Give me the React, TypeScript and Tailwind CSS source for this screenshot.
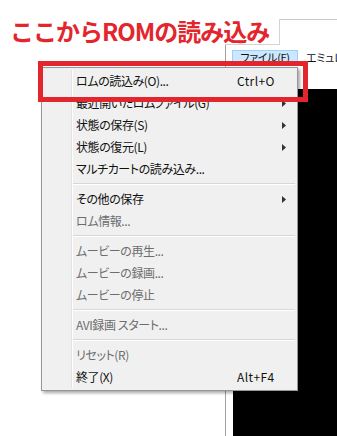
type Item =
  | { kind: 'sep' }
  | { kind: 'item'; label: string; shortcut?: string; sub?: boolean; disabled?: boolean };

const ITEMS: Item[] = [
  { kind: 'item', label: 'ロムの読込み(O)...', shortcut: 'Ctrl+O' },
  { kind: 'item', label: '最近開いたロムファイル(G)', sub: true },
  { kind: 'item', label: '状態の保存(S)', sub: true },
  { kind: 'item', label: '状態の復元(L)', sub: true },
  { kind: 'item', label: 'マルチカートの読み込み...' },
  { kind: 'sep' },
  { kind: 'item', label: 'その他の保存', sub: true },
  { kind: 'item', label: 'ロム情報...', disabled: true },
  { kind: 'sep' },
  { kind: 'item', label: 'ムービーの再生...', disabled: true },
  { kind: 'item', label: 'ムービーの録画...', disabled: true },
  { kind: 'item', label: 'ムービーの停止', disabled: true },
  { kind: 'sep' },
  { kind: 'item', label: 'AVI録画 スタート...', disabled: true },
  { kind: 'sep' },
  { kind: 'item', label: 'リセット(R)', disabled: true },
  { kind: 'item', label: '終了(X)', shortcut: 'Alt+F4' },
];

const uiFont = "[font-family:'Noto_Sans_CJK_JP','Noto_Sans',sans-serif] [font-feature-settings:'palt']";

function SubArrow() {
  return (
    <svg width="4" height="7" viewBox="0 0 4 7" className="block">
      <path d="M0 0 L4 3.5 L0 7 Z" fill="#333" />
    </svg>
  );
}

function FileMenu() {
  return (
    <div
      className={`absolute left-[41px] top-[67px] w-[257px] border border-[#979797] bg-[#f0f0f0] p-[2px] shadow-[2px_2px_3px_rgba(0,0,0,0.35)] ${uiFont}`}
    >
      <div className="flex">
        {/* icon gutter */}
        <div className="w-[28px] shrink-0 border-r border-[#e2e3e3]" />
        <div className="flex flex-1 flex-col border-l border-white">
          {ITEMS.map((it, i) =>
            it.kind === 'sep' ? (
              <div key={i} className="flex h-[8px] flex-col justify-center">
                <div className="h-px bg-[#d7d7d7]" />
                <div className="h-px bg-white" />
              </div>
            ) : (
              <div
                key={i}
                className={`flex h-[22px] items-center pl-[3px] text-[12px] leading-none ${
                  it.disabled ? 'text-[#6d6d6d]' : 'text-[#111]'
                }`}
              >
                <span className="w-[161px] shrink-0 whitespace-nowrap tracking-[-0.4px]">{it.label}</span>
                <span className="w-[45px] shrink-0 whitespace-nowrap tracking-[0.4px]">{it.shortcut ?? ''}</span>
                {it.sub && <SubArrow />}
              </div>
            ),
          )}
        </div>
      </div>
    </div>
  );
}

export default function App() {
  return (
    <div className="relative h-[436px] w-[337px] overflow-hidden bg-white">
      {/* emulator window, top-left corner hidden under the caption */}
      <div className="relative ml-[225px] mt-[19px] flex h-[417px] flex-col border-l border-t border-l-[#a3a3a3] border-t-[#c9c9c9] bg-white">
        <div className="absolute -left-px -top-px h-[26px] w-[55px] border-b border-r border-[#d4d4d4] bg-white" />
        <div className="h-[30px] shrink-0" />
        <div className={`flex h-[14px] shrink-0 items-center overflow-hidden pl-[6px] text-[11px] leading-none text-[#111] ${uiFont}`}>
          <div className="flex h-[14px] w-[66px] shrink-0 items-center justify-center whitespace-nowrap border border-[#99d1ff] bg-[#cce8ff] tracking-[-0.3px]">
            ファイル(F)
          </div>
          <span className="shrink-0 whitespace-nowrap pl-[8px] tracking-[-0.3px]">エミュレーション</span>
        </div>
        <div className="h-[25px] shrink-0" />
        <div className="ml-[7px] flex-1 bg-black" />
      </div>

      {/* caption */}
      <div className="absolute left-[10px] top-[19px] whitespace-nowrap text-[24px] font-bold leading-[24px] tracking-[-1px] text-[#e3262d] [font-family:'Noto_Sans_CJK_JP','Noto_Sans',sans-serif]">
        ここからROMの読み込み
      </div>

      <FileMenu />

      {/* annotation frame */}
      <div className="pointer-events-none absolute left-[38px] top-[61px] h-[41px] w-[270px] border-[5px] border-[#e3262d]" />
    </div>
  );
}
